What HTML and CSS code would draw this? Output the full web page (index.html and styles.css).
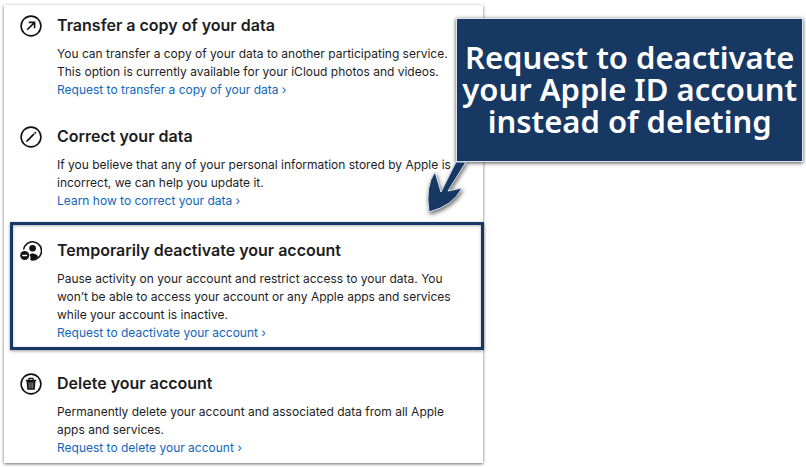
FILE: index.html
```html
<!DOCTYPE html>
<html lang="en">
<head>
    <meta charset="UTF-8">
    <meta name="viewport" content="width=device-width, initial-scale=1.0">
    <title>Manage your data</title>
    <link rel="stylesheet" href="styles.css">
</head>
<body>
    <main class="card">
        <!-- Transfer -->
        <section class="option">
            <svg class="icon" viewBox="0 0 22 22" aria-hidden="true">
                <circle class="line" cx="11" cy="11" r="9.9"/>
                <path class="line" d="M7.2 14.8L14.4 7.6M8.8 7.4h5.8v5.8"/>
            </svg>
            <div class="details">
                <h2>Transfer a copy of your data</h2>
                <p>You can transfer a copy of your data to another participating service.<br>This option is currently available for your iCloud photos and videos.</p>
                <a href="#">Request to transfer a copy of your data ›</a>
            </div>
        </section>

        <!-- Correct -->
        <section class="option">
            <svg class="icon" viewBox="0 0 22 22" aria-hidden="true">
                <circle class="line" cx="11" cy="11" r="9.9"/>
                <path d="M6 16l.6-1.8 6.9-6.9 1.2 1.2-6.9 6.9zM14 6.8l.8-.8c.7-.6 1.8.5 1.2 1.2l-.8.8z"/>
            </svg>
            <div class="details">
                <h2>Correct your data</h2>
                <p>If you believe that any of your personal information stored by Apple is<br>incorrect, we can help you update it.</p>
                <a href="#">Learn how to correct your data ›</a>
            </div>
        </section>

        <!-- Deactivate -->
        <section class="option highlight">
            <svg class="icon" viewBox="0 0 22 22" aria-hidden="true">
                <path class="line" d="M3.6 9.5A9 9 0 1 1 11 19.7"/>
                <circle cx="12.6" cy="8.3" r="3.3"/>
                <path d="M10 20c.8-1.4.7-3.6-.5-5.3 1.8-1.9 5.9-1.8 8.7 1.5-2 2.8-4.8 4-8.2 3.800z"/>
                <circle cx="4.7" cy="15.5" r="4.5"/>
                <path class="minus" d="M2.2 15.5h5"/>
            </svg>
            <div class="details">
                <h2>Temporarily deactivate your account</h2>
                <p>Pause activity on your account and restrict access to your data. You<br>won’t be able to access your account or any Apple apps and services<br>while your account is inactive.</p>
                <a href="#">Request to deactivate your account ›</a>
            </div>
        </section>

        <!-- Delete -->
        <section class="option">
            <svg class="icon" viewBox="0 0 22 22" aria-hidden="true">
                <circle class="line" cx="11" cy="11" r="9.9"/>
                <path class="line thin" d="M5.8 7.3h10.4M9 7V5.3h4V7"/>
                <path d="M6.5 8h9l-.8 8.8H7.3z"/>
                <path class="slats" d="M9.1 9.3l.2 6M11 9.3v6M12.9 9.3l-.2 6"/>
            </svg>
            <div class="details">
                <h2>Delete your account</h2>
                <p>Permanently delete your account and associated data from all Apple<br>apps and services.</p>
                <a href="#">Request to delete your account ›</a>
            </div>
        </section>
    </main>

    <!-- Callout with the arrow pointing at the highlighted option -->
    <aside class="callout">
        <p>Request to deactivate<br>your Apple ID account<br>instead of deleting</p>
        <svg class="arrow" viewBox="0 0 48 60" aria-hidden="true">
            <path d="M36 1L21 31L15 11Q5 25 9 51Q33 45 42 27L28 30L46 1z"/>
        </svg>
    </aside>
</body>
</html>
```
FILE: styles.css
```css
:root {
    --navy: #183864;
    --link: #0f66bb;
    --text: #1d1d1f;
}

* {
    box-sizing: border-box;
}

body {
    margin: 0;
    padding: 5px 4px;
    background-color: white;
    color: var(--text);
    font-family: Inter, "Liberation Sans", sans-serif;
    font-size: 12px;
    line-height: 18px;
}

h2,
p {
    margin: 0;
}

.card {
    width: 60%;
    padding: 8px 0 6px;
    background-color: white;
    box-shadow: 0 1px 3px rgba(0, 0, 0, 0.6);
}

.option {
    display: flex;
    gap: 15px;
    padding: 0 16px;
    margin-bottom: 25px;
}

.option:last-child {
    margin-bottom: 0;
}

.icon {
    width: 22px;
    height: 22px;
    margin-top: 2px;
    flex-shrink: 0;
    fill: #111;
}

.icon .line {
    fill: none;
    stroke: #111;
    stroke-width: 1.6;
}

.icon .thin {
    stroke-width: 1.2;
}

.icon .minus {
    stroke: white;
    stroke-width: 1.4;
}

.icon .slats {
    stroke: #aaa;
    stroke-width: 0.8;
}

.details {
    flex: 1;
}

.details h2 {
    margin-bottom: 8px;
    font-size: 16px;
    font-weight: 600;
    line-height: 24px;
}

.details a {
    display: block;
    color: var(--link);
    text-decoration: none;
}

.highlight {
    margin: -13px -1px 21px 6px;
    padding: 13px 7px 5px;
    border: 3px solid var(--navy);
    box-shadow: 0 1px 3px rgba(0, 0, 0, 0.4), inset 0 1px 3px rgba(0, 0, 0, 0.3);
}

.callout {
    position: absolute;
    top: 18px;
    right: 3px;
    width: 43%;
    padding: 22px 0 24px;
    border: 1px solid #dfe5ee;
    background-color: var(--navy);
    box-shadow: 0 1px 4px rgba(0, 0, 0, 0.7);
    color: white;
    font-family: "Noto Sans", "Open Sans", sans-serif;
    font-size: 31px;
    font-weight: 600;
    line-height: 32px;
    text-align: center;
    white-space: nowrap;
}

.arrow {
    position: absolute;
    top: 100%;
    left: -37px;
    width: 48px;
    height: 60px;
    fill: var(--navy);
    stroke: #dfe5ee;
    filter: drop-shadow(1px 2px 2px rgba(0, 0, 0, 0.6));
}
```
